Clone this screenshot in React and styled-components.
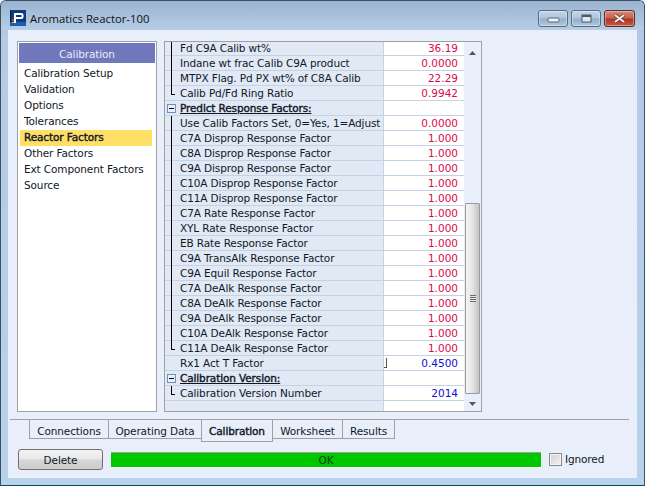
import React from 'react';
import styled, { createGlobalStyle, css } from 'styled-components';

const Global = createGlobalStyle`
  html, body { margin: 0; padding: 0; background: #e8effa; overflow: hidden; }
  * { box-sizing: border-box; }
`;

const strong = css`
  -webkit-text-stroke: 0.4px currentColor;
`;

const Win = styled.div`
  width: 645px; height: 486px; display: flex; flex-direction: column;
  border: 1px solid #3d5060; border-bottom-color: #0d4a5c; border-radius: 6px 6px 0 0;
  background: linear-gradient(180deg, #a7bdd6 0%, #b3cbe6 8%, #b9d2ec 100%);
  font-family: "DejaVu Sans", sans-serif; font-size: 10.5px; letter-spacing: -0.12px; color: #000; overflow: hidden;
`;
const TitleBar = styled.div`
  height: 29px; flex: none; display: flex; align-items: center; padding: 5px 9px 0 9px;
  background: linear-gradient(180deg, #9ab4d0 0%, #b6cde6 100%);
`;
const Title = styled.div`
  margin-left: 4px; flex: 1; font-family: "Open Sans", sans-serif; font-size: 11.3px; letter-spacing: 0; color: #111;
`;
const Caption = styled.div`
  width: ${p => p.$close ? 31 : 30}px; height: 17px; margin-left: 3px; display: flex; align-items: center; justify-content: center;
  border: 1px solid #5a6b80; border-radius: 3px;
  background: ${p => p.$close
    ? 'linear-gradient(180deg,#d98a78 0%,#c4614e 48%,#ad3322 52%,#c85a40 100%)'
    : 'linear-gradient(180deg,#c6d6e8 0%,#aec3da 48%,#94adc8 52%,#b2c7dd 100%)'};
  border-color: ${p => p.$close ? '#5d2a2a' : '#5a6b80'};
  box-shadow: inset 0 0 0 1px rgba(255,255,255,.35);
`;
const Client = styled.div`
  flex: 1; margin: 0 7px 7px; background: #e8effa; display: flex; flex-direction: column; padding: 11px 2px 0;
`;
const Main = styled.div`
  height: 371px; display: flex; gap: 7px; padding-left: 7px; flex: none;
`;
const Side = styled.div`
  width: 140px; border: 1px solid #a0a0a0; background: #fff; padding: 1px; display: flex; flex-direction: column;
`;
const SideHead = styled.div`
  height: 20px; flex: none; padding-top: 2px; background: #7177bb; color: #e8ecf8; display: flex; align-items: center; justify-content: center;
`;
const SideList = styled.div`display: flex; flex-direction: column; padding: 3px 3px 0 1px;`;
const SideItem = styled.div`
  height: 16px; line-height: 15px; padding-left: 4px; white-space: nowrap;
  background: ${p => p.$on ? '#ffe066' : 'transparent'};
  color: #101828;
  ${p => p.$on && strong}
`;
const Grid = styled.div`
  width: 318px; border: 1px solid #a0a0a0; display: flex; background: #e8effa; overflow: hidden;
`;
const Rows = styled.div`width: 299px; flex: none; display: flex; flex-direction: column; margin-top: -1px;`;
const Row = styled.div`
  height: 15px; flex: none; display: flex; border-bottom: 1px solid #c5d2e6; background: #e1e9f5;
`;
const Gutter = styled.div`
  width: 14px; flex: none; position: relative;
`;
const TreeV = styled.span`
  position: absolute; left: 6px; top: 0; bottom: ${p => p.$end ? '6px' : '-1px'}; width: 1px; background: #000;
`;
const TreeH = styled.span`
  position: absolute; left: 6px; top: 8px; width: 4px; height: 1px; background: #000;
`;
const Minus = styled.span`
  position: absolute; left: 2px; top: 3px; width: 9px; height: 9px; border: 1px solid #6f8fbf; background: #e8effa;
  &::after { content: ''; position: absolute; left: 1px; top: 3px; width: 5px; height: 1px; background: #000; }
`;
const Label = styled.div`
  width: 205px; flex: none; padding-left: 1px; line-height: 14px; white-space: nowrap; overflow: hidden;
  color: #101828; border-right: 1px solid #c5d2e6;
  text-decoration: ${p => p.$head ? 'underline' : 'none'};
  ${p => p.$head && strong}
`;
const Value = styled.div`
  flex: 1; background: #fff; text-align: right; padding-right: 6px; line-height: 14px; position: relative;
  letter-spacing: 0;
  color: ${p => p.$blue ? '#1010d0' : '#dc0a4a'};
`;
const Caret = styled.span`
  position: absolute; left: 0; top: 2px; width: 3px; height: 10px; border-right: 1px solid #555; border-bottom: 1px solid #555;
`;
const Scroll = styled.div`
  flex: 1; display: flex; flex-direction: column; align-items: stretch; background: #e8effa;
`;
const Arrow = styled.div`
  height: 17px; flex: none; display: flex; align-items: center; justify-content: center;
  padding: ${p => p.$top ? '5px 0 0' : '2px 0 0'};
`;
const Track = styled.div`flex: 1; display: flex; flex-direction: column; justify-content: flex-end;`;
const Thumb = styled.div`
  height: 191px; margin: 0 1px; border: 1px solid #9a9a9a; border-radius: 1px; display: flex; align-items: center; justify-content: center;
  background: linear-gradient(90deg, #f4f4f4 0%, #e6e6e6 45%, #c4c4c4 100%);
`;
const Grip = styled.div`
  width: 6px; height: 7px;
  background: repeating-linear-gradient(180deg, #6a6a6a 0 1px, #e8e8e8 1px 2px);
`;
const Sep = styled.div`
  height: 1px; background: #a0a0a0; margin-top: 7px; width: 619px; flex: none;
`;
const Tabs = styled.div`
  display: flex; padding-left: 19px; height: 20px; align-items: flex-start; flex: none;
`;
const Tab = styled.div`
  width: ${p => p.$w + 1}px; height: ${p => p.$on ? 22 : 19}px; padding-top: 4px; line-height: 14px; text-align: center; white-space: nowrap;
  border: 1px solid #a0a0a0; border-top: none; margin-right: -1px;
  background: #e8effa; color: #101828;
  position: relative; z-index: ${p => p.$on ? 1 : 0};
  ${p => p.$on && strong}
`;
const Bottom = styled.div`
  display: flex; align-items: center; padding-left: 8px; margin-top: 9px; flex: none;
`;
const Btn = styled.div`
  width: 85px; height: 21px; border: 1px solid #707070; border-radius: 3px; display: flex; align-items: center; justify-content: center;
  background: linear-gradient(180deg, #f4f4f4 0%, #e8e8e8 48%, #d6d6d6 52%, #cdcdcd 100%); color: #101828;
`;
const Status = styled.div`
  width: 430px; height: 16px; margin-left: 8px; background: #00c800; border-top: 1px solid #a0a0a0; border-bottom: 1px solid #fff;
  display: flex; align-items: center; justify-content: center; color: #0a3a0a;
`;
const Check = styled.div`
  width: 13px; height: 13px; margin: -1px 0 0 8px; border: 1px solid #8a8a8a;
  background: linear-gradient(135deg, #d2d2d2 0%, #f2f2f2 100%); box-shadow: inset 0 0 0 1px #f4f4f4;
`;
const CheckLabel = styled.div`margin: -1px 0 0 3px; color: #101828;`;

const P = () => (
  <svg width="16" height="16" viewBox="0 0 16 16">
    <rect width="16" height="16" fill="#0f3a7c" />
    <rect x="0" y="0" width="1" height="16" fill="#0a1c38" />
    <rect x="0" y="12" width="16" height="4" fill="#1b5fb4" />
    <path d="M4 3h7.5A2 2 0 0 1 13.5 5v2a2 2 0 0 1-2 2H6v4H4zM6 5v2h5.5V5z" fill="#fff" fillRule="evenodd" />
    <rect x="2" y="9" width="2" height="2" fill="#d84030" />
    <rect x="2" y="12" width="2" height="1" fill="#e0c040" />
  </svg>
);

const side = ['Calibration Setup', 'Validation', 'Options', 'Tolerances', 'Reactor Factors', 'Other Factors', 'Ext Component Factors', 'Source'];
const rows = [
  ['v', 'Fd C9A Calib wt%', '36.19'],
  ['v', 'Indane wt frac Calib C9A product', '0.0000'],
  ['v', 'MTPX Flag. Pd PX wt% of C8A Calib', '22.29'],
  ['e', 'Calib Pd/Fd Ring Ratio', '0.9942'],
  ['h', 'Predict Response Factors:', ''],
  ['v', 'Use Calib Factors Set, 0=Yes, 1=Adjust for Feed', '0.0000'],
  ['v', 'C7A Disprop Response Factor', '1.000'],
  ['v', 'C8A Disprop Response Factor', '1.000'],
  ['v', 'C9A Disprop Response Factor', '1.000'],
  ['v', 'C10A Disprop Response Factor', '1.000'],
  ['v', 'C11A Disprop Response Factor', '1.000'],
  ['v', 'C7A Rate Response Factor', '1.000'],
  ['v', 'XYL Rate Response Factor', '1.000'],
  ['v', 'EB Rate Response Factor', '1.000'],
  ['v', 'C9A TransAlk Response Factor', '1.000'],
  ['v', 'C9A Equil Response Factor', '1.000'],
  ['v', 'C7A DeAlk Response Factor', '1.000'],
  ['v', 'C8A DeAlk Response Factor', '1.000'],
  ['v', 'C9A DeAlk Response Factor', '1.000'],
  ['v', 'C10A DeAlk Response Factor', '1.000'],
  ['e', 'C11A DeAlk Response Factor', '1.000'],
  ['n', 'Rx1 Act T Factor', '0.4500', 'b', true],
  ['h', 'Calibration Version:', ''],
  ['e', 'Calibration Version Number', '2014', 'b'],
  ['n', '', ''],
];
const tabs = [['Connections', 79], ['Operating Data', 93], ['Calibration', 71], ['Worksheet', 70], ['Results', 52]];

const Tri = ({ up }) => (
  <svg width="7" height="4" viewBox="0 0 7 4"><path d={up ? 'M3.5 0L7 4H0z' : 'M0 0h7L3.5 4z'} fill="#555" /></svg>
);

export default function App() {
  return (
    <>
      <Global />
      <Win>
        <TitleBar>
          <P />
          <Title>Aromatics Reactor-100</Title>
          <Caption>
            <svg width="13" height="7" viewBox="0 0 13 7" style={{ marginTop: 5 }}><rect x="1" y="1" width="11" height="4" rx="1" fill="#eef2f7" stroke="#56667a" /></svg>
          </Caption>
          <Caption>
            <svg width="11" height="9" viewBox="0 0 11 9"><rect x="1" y="1" width="9" height="7" fill="#dfe7f0" stroke="#4a5a6e" /><rect x="1" y="1" width="9" height="2" fill="#4a5a6e" /></svg>
          </Caption>
          <Caption $close>
            <svg width="13" height="9" viewBox="0 0 13 9"><path d="M2 1L11 8M11 1L2 8" stroke="#5d2a2a" strokeWidth="3.4" /><path d="M2 1L11 8M11 1L2 8" stroke="#f4ece8" strokeWidth="2.2" /></svg>
          </Caption>
        </TitleBar>
        <Client>
          <Main>
            <Side>
              <SideHead>Calibration</SideHead>
              <SideList>
                {side.map(s => <SideItem key={s} $on={s === 'Reactor Factors'}>{s}</SideItem>)}
              </SideList>
            </Side>
            <Grid>
              <Rows>
                {rows.map(([k, l, v, b, caret], i) => (
                  <Row key={i}>
                    <Gutter>
                      {k === 'v' && <TreeV />}
                      {k === 'e' && <><TreeV $end /><TreeH /></>}
                      {k === 'h' && <Minus />}
                    </Gutter>
                    <Label $head={k === 'h'}>{l}</Label>
                    <Value $blue={b === 'b'}>{caret && <Caret />}{v}</Value>
                  </Row>
                ))}
              </Rows>
              <Scroll>
                <Arrow $top><Tri up /></Arrow>
                <Track><Thumb><Grip /></Thumb></Track>
                <Arrow><Tri /></Arrow>
              </Scroll>
            </Grid>
          </Main>
          <Sep />
          <Tabs>
            {tabs.map(([t, w]) => <Tab key={t} $w={w} $on={t === 'Calibration'}>{t}</Tab>)}
          </Tabs>
          <Bottom>
            <Btn>Delete</Btn>
            <Status>OK</Status>
            <Check />
            <CheckLabel>Ignored</CheckLabel>
          </Bottom>
        </Client>
      </Win>
    </>
  );
}
